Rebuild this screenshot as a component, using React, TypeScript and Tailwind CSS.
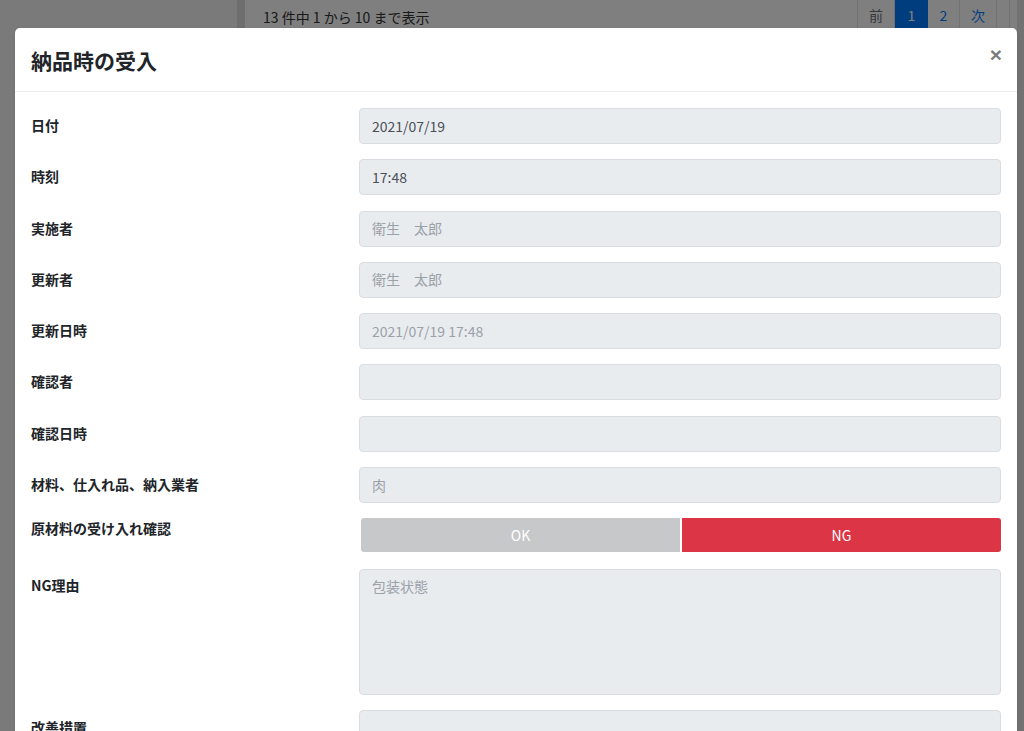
import React from 'react'

const font = { fontFamily: '"Noto Sans CJK JP", "Noto Sans", sans-serif' }

interface Field {
  label: string
  value: string
  muted?: boolean
}

const fields: Field[] = [
  { label: '日付', value: '2021/07/19' },
  { label: '時刻', value: '17:48' },
  { label: '実施者', value: '衛生　太郎', muted: true },
  { label: '更新者', value: '衛生　太郎', muted: true },
  { label: '更新日時', value: '2021/07/19 17:48', muted: true },
  { label: '確認者', value: '' },
  { label: '確認日時', value: '' },
  { label: '材料、仕入れ品、納入業者', value: '肉', muted: true },
]

function Row({ label, children, labelClass = 'pt-[7px]' }: { label: string; children: React.ReactNode; labelClass?: string }) {
  return (
    <div className="flex items-start">
      <div className={`w-[328px] shrink-0 text-[14px] leading-[21px] font-bold text-[#212529] ${labelClass}`}>{label}</div>
      <div className="flex-1">{children}</div>
    </div>
  )
}

export default function App() {
  return (
    <div className="relative w-[1024px] h-[731px] overflow-hidden bg-white" style={font}>
      {/* page behind the modal */}
      <div className="flex h-full">
        <div className="w-[237px] shrink-0 bg-[#f5f5f5]" />
        <div className="w-[8px] shrink-0 bg-[#dcdcdc]" />
        <div className="flex-1 bg-white">
          <div className="flex items-center justify-between -mt-[5px] pl-[18px] pr-[14px]">
            <div className="text-[14px] text-[#333] pt-[4px]">13 件中 1 から 10 まで表示</div>
            <div className="flex text-[14px] border border-[#dee2e6] rounded">
              <div className="w-[37px] h-[38px] flex items-center justify-center text-[#6c757d] border-r border-[#dee2e6]">前</div>
              <div className="w-[33px] h-[38px] flex items-center justify-center bg-[#007bff] text-white">1</div>
              <div className="w-[32px] h-[38px] flex items-center justify-center text-[#007bff] border-r border-[#dee2e6]">2</div>
              <div className="w-[37px] h-[38px] flex items-center justify-center text-[#007bff] border-r border-[#dee2e6]">次</div>
              <div className="w-[12px] h-[38px]" />
            </div>
          </div>
        </div>
      </div>

      {/* backdrop */}
      <div className="absolute inset-0 bg-black/50" />
      <div className="absolute top-0 right-0 bottom-0 w-[7px] bg-black/10" />

      {/* modal */}
      <div className="absolute left-[15px] top-[28px] w-[1002px] bg-white rounded-[5px] shadow-sm">
        <div className="flex items-center justify-between px-4 pt-4 pb-[15px] border-b border-[#e9ecef]">
          <h5 className="text-[21px] leading-[32px] font-bold text-[#212529]">納品時の受入</h5>
          <span
            className="text-[21px] leading-none font-bold text-[#7d7d7d] -mt-[12px] -mr-[1px]"
            style={{ fontFamily: '"Liberation Sans", Arial, sans-serif' }}
          >
            ×
          </span>
        </div>
        <div className="px-4 pt-4 flex flex-col gap-[15.3px]">
          {fields.map((f) => (
            <Row key={f.label} label={f.label}>
              <div
                className={`h-[36px] rounded border border-[#d9dde1] bg-[#e9ecef] px-3 flex items-center text-[14px] ${f.muted ? 'text-[#9aa1a8]' : 'text-[#495057]'}`}
              >
                {f.value}
              </div>
            </Row>
          ))}
          <Row label="原材料の受け入れ確認" labelClass="pt-0">
            <div className="flex pl-[2px] h-[34px] text-[14px] text-white">
              <div className="flex-1 bg-[#c6c8ca] rounded-l-[3px] flex items-center justify-center">OK</div>
              <div className="w-[2px]" />
              <div className="flex-1 bg-[#dc3545] rounded-r-[3px] flex items-center justify-center">NG</div>
            </div>
          </Row>
          <Row label="NG理由">
            <div className="h-[126px] mt-[1px] rounded border border-[#d9dde1] bg-[#e9ecef] px-3 pt-[6px] text-[14px] text-[#9aa1a8]">包装状態</div>
          </Row>
          <Row label="改善措置">
            <div className="h-[80px] rounded border border-[#d9dde1] bg-[#e9ecef]" />
          </Row>
        </div>
      </div>
    </div>
  )
}
